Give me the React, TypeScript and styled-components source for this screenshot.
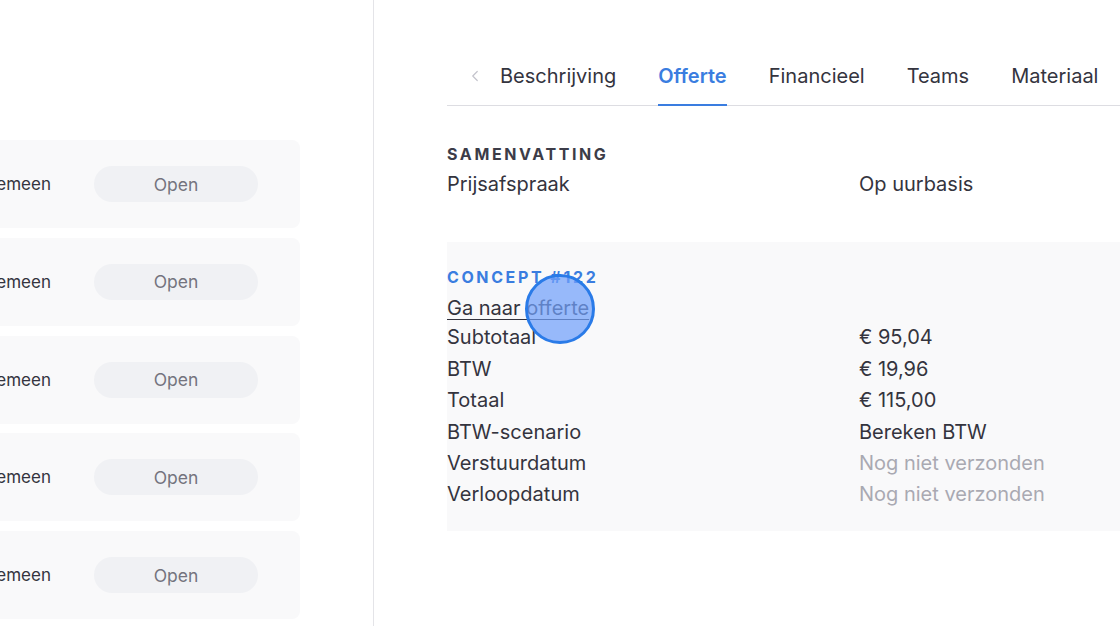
import styled, { createGlobalStyle } from "styled-components";
import { ChevronLeft } from "lucide-react";

const GlobalStyle = createGlobalStyle`
  html, body {
    margin: 0;
    padding: 0;
    background: #ffffff;
    font-family: Inter, "Open Sans", sans-serif;
    color: #30303a;
  }
`;

const Page = styled.div`
  position: relative;
  display: flex;
  width: 1120px;
  height: 626px;
  overflow: hidden;
`;

const LeftPanel = styled.div`
  width: 374px;
  flex-shrink: 0;
  border-right: 1px solid #e4e4e8;
  overflow: hidden;
  padding-top: 140px;
  box-sizing: border-box;
`;

const CardList = styled.div`
  display: flex;
  flex-direction: column;
  gap: 9.75px;
  width: 500px;
  margin-left: -200px;
`;

const Card = styled.div`
  height: 88px;
  display: flex;
  align-items: center;
  justify-content: flex-end;
  gap: 43px;
  padding-right: 42px;
  background: #f9f9fa;
  border-radius: 8px;
`;

const CardLabel = styled.span`
  font-size: 17px;
  color: #34343e;
`;

const Pill = styled.span`
  width: 164px;
  height: 36px;
  display: flex;
  align-items: center;
  justify-content: center;
  border-radius: 18px;
  background: #f0f1f4;
  color: #74747e;
  font-size: 17.5px;
`;

const RightPanel = styled.div`
  flex: 1;
  padding-left: 73px;
  padding-top: 62px;
`;

const TabBar = styled.div`
  display: flex;
  align-items: flex-start;
  gap: 42px;
  padding-left: 19px;
  border-bottom: 1px solid #dddde2;
  white-space: nowrap;
`;

const Chevron = styled.span`
  display: flex;
  align-items: center;
  height: 28px;
  margin-right: -26px;
  color: #c4c4cc;
`;

const Tab = styled.span<{ $active?: boolean }>`
  font-size: 20px;
  line-height: 28px;
  padding-bottom: 14px;
  border-bottom: 2px solid ${(p) => (p.$active ? "#3a7de0" : "transparent")};
  color: ${(p) => (p.$active ? "#3a7de0" : "#34343e")};
  font-weight: ${(p) => (p.$active ? 600 : 400)};
  margin-bottom: -1px;
`;

const Heading = styled.div<{ $blue?: boolean }>`
  font-size: 16px;
  line-height: 20px;
  font-weight: 700;
  letter-spacing: 2.6px;
  color: ${(p) => (p.$blue ? "#3a7de0" : "#3c3c48")};
`;

const Summary = styled.div`
  margin-top: 38px;
`;

const Rows = styled.div`
  display: grid;
  grid-template-columns: 412px 1fr;
  font-size: 20px;
  line-height: 31.4px;
`;

const SummaryRows = styled(Rows)`
  margin-top: 5px;
`;

const Cell = styled.span<{ $muted?: boolean }>`
  color: ${(p) => (p.$muted ? "#a9a9b2" : "#34343e")};
  white-space: nowrap;
`;

const LinkCell = styled.a`
  grid-column: 1 / 3;
  line-height: 28px;
  color: #34343e;
  text-decoration: underline;
  text-underline-offset: 4px;
  text-decoration-thickness: 1px;
  justify-self: start;
`;

const ConceptBox = styled.div`
  margin-top: 42px;
  background: #f9f9fa;
  padding: 25px 0 20px;
`;

const ConceptRows = styled(Rows)`
  margin-top: 7px;
`;

const Cursor = styled.div`
  position: absolute;
  left: 525px;
  top: 274px;
  width: 70px;
  height: 70px;
  box-sizing: border-box;
  border-radius: 50%;
  border: 3px solid #2a7be8;
  background: rgba(112, 160, 250, 0.72);
  pointer-events: none;
`;

const cards = [1, 2, 3, 4, 5];

const conceptRows: [string, string, boolean?][] = [
  ["Subtotaal", "€ 95,04"],
  ["BTW", "€ 19,96"],
  ["Totaal", "€ 115,00"],
  ["BTW-scenario", "Bereken BTW"],
  ["Verstuurdatum", "Nog niet verzonden", true],
  ["Verloopdatum", "Nog niet verzonden", true],
];

const App = () => {
  return (
    <>
      <GlobalStyle />
      <Page>
        <LeftPanel>
          <CardList>
            {cards.map((c) => (
              <Card key={c}>
                <CardLabel>Algemeen</CardLabel>
                <Pill>Open</Pill>
              </Card>
            ))}
          </CardList>
        </LeftPanel>
        <RightPanel>
          <TabBar>
            <Chevron>
              <ChevronLeft size={18} strokeWidth={1.6} />
            </Chevron>
            <Tab>Beschrijving</Tab>
            <Tab $active>Offerte</Tab>
            <Tab>Financieel</Tab>
            <Tab>Teams</Tab>
            <Tab>Materiaal</Tab>
          </TabBar>
          <Summary>
            <Heading>SAMENVATTING</Heading>
            <SummaryRows>
              <Cell>Prijsafspraak</Cell>
              <Cell>Op uurbasis</Cell>
            </SummaryRows>
          </Summary>
          <ConceptBox>
            <Heading $blue>CONCEPT #122</Heading>
            <ConceptRows>
              <LinkCell href="#">Ga naar offerte</LinkCell>
              {conceptRows.map(([label, value, muted]) => [
                <Cell key={label}>{label}</Cell>,
                <Cell key={label + "-value"} $muted={muted}>
                  {value}
                </Cell>,
              ])}
            </ConceptRows>
          </ConceptBox>
        </RightPanel>
        <Cursor />
      </Page>
    </>
  );
};

export default App;
